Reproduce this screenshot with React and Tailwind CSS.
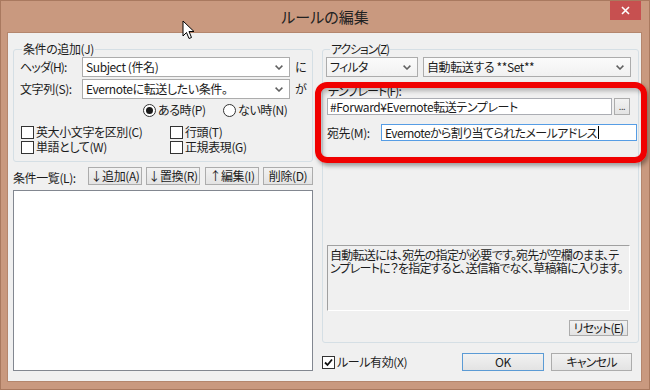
import React from "react";

const Chevron = () => (
  <svg width="8" height="5" viewBox="0 0 8 5" className="shrink-0">
    <path d="M0.6 0.6 L4 4 L7.4 0.6" fill="none" stroke="#606060" strokeWidth="1.5" />
  </svg>
);

const Combo = ({ text, className }) => (
  <div className={"h-[20px] border border-[#acacac] flex items-center pl-[3px] pr-[6px] " + className}>
    <span className="flex-1 whitespace-nowrap leading-[16px]">{text}</span>
    <Chevron />
  </div>
);

const Btn = ({ children, className }) => (
  <div className={"flex items-center justify-center border bg-linear-to-b from-[#f2f2f2] to-[#e3e3e3] whitespace-nowrap leading-[14px] " + className}>
    {children}
  </div>
);

const Check = ({ checked }) => (
  <div className="w-[13px] h-[13px] border border-[#333] bg-white flex items-center justify-center shrink-0">
    {checked && (
      <svg width="9" height="9" viewBox="0 0 9 9">
        <path d="M1 4.5 L3.5 7 L8 1.5" fill="none" stroke="#111" strokeWidth="1.8" />
      </svg>
    )}
  </div>
);

const Radio = ({ checked }) => (
  <div className="w-[13px] h-[13px] rounded-full border border-[#333] bg-white flex items-center justify-center shrink-0">
    {checked && <div className="w-[7px] h-[7px] rounded-full bg-[#1a1a1a]" />}
  </div>
);

const App = () => {
  return (
    <div className="relative w-[650px] h-[390px] overflow-hidden bg-[#c9997f] border border-[#a9795f] flex flex-col font-['Noto_Sans_CJK_JP',sans-serif] text-[12px] text-[#1c1c1c] tracking-[-0.4px] [font-feature-settings:'palt']">
      {/* title bar */}
      <div className="relative h-[31px] shrink-0 flex items-center justify-center">
        <span className="text-[15px] text-[#222] leading-[20px] mt-[1px] tracking-normal">ルールの編集</span>
        <div className="absolute right-[8px] top-0 w-[31px] h-[19px] bg-[#c75050] flex items-center justify-center">
          <svg width="9" height="9" viewBox="0 0 9 9">
            <path d="M1 1 L8 8 M8 1 L1 8" stroke="#fff" strokeWidth="1.6" />
          </svg>
        </div>
      </div>

      {/* client */}
      <div className="ml-[6px] mr-[7px] h-[350px] border border-[#b4866d] bg-[#f0f0f0] flex pl-[5px] pt-[16px] gap-[9px]">
        {/* left column */}
        <div className="w-[300px] flex flex-col">
          <div className="relative h-[113px] border border-[#d5dfe5] rounded-[3px] pt-[7px]">
            <span className="absolute left-[8px] top-[-8px] px-[1px] bg-[#f0f0f0] leading-[14px]">条件の追加(J)</span>
            <div className="flex items-center h-[20px] pl-[6px]">
              <span className="w-[62px] leading-[14px] tracking-[-0.9px]">ヘッダ(H):</span>
              <Combo className="w-[208px] bg-white" text="Subject (件名)" />
              <span className="ml-[5px] leading-[14px]">に</span>
            </div>
            <div className="flex items-center h-[20px] pl-[6px] mt-[2px]">
              <span className="w-[62px] leading-[14px]">文字列(S):</span>
              <Combo className="w-[208px] bg-white" text="Evernoteに転送したい条件。" />
              <span className="ml-[5px] leading-[14px]">が</span>
            </div>
            <div className="flex items-center h-[14px] pl-[129px] mt-[4px]">
              <div className="w-[80px] flex items-center gap-[2px]">
                <Radio checked />
                <span className="leading-[14px]">ある時(P)</span>
              </div>
              <div className="flex items-center gap-[2px]">
                <Radio />
                <span className="leading-[14px]">ない時(N)</span>
              </div>
            </div>
            <div className="flex items-center h-[14px] pl-[7px] mt-[8px]">
              <div className="w-[149px] flex items-center gap-[2px]">
                <Check />
                <span className="leading-[14px]">英大小文字を区別(C)</span>
              </div>
              <div className="flex items-center gap-[2px]">
                <Check />
                <span className="leading-[14px]">行頭(T)</span>
              </div>
            </div>
            <div className="flex items-center h-[14px] pl-[7px] mt-[1px]">
              <div className="w-[149px] flex items-center gap-[2px]">
                <Check />
                <span className="leading-[14px]">単語として(W)</span>
              </div>
              <div className="flex items-center gap-[2px]">
                <Check />
                <span className="leading-[14px]">正規表現(G)</span>
              </div>
            </div>
          </div>

          <div className="flex items-center h-[18px] mt-[5px]">
            <span className="w-[75px] leading-[14px] mt-[4px]">条件一覧(L):</span>
            <Btn className="w-[54px] h-[18px] border-[#acacac]">↓追加(A)</Btn>
            <Btn className="w-[54px] h-[18px] border-[#acacac] ml-[4px]">↓置換(R)</Btn>
            <Btn className="w-[54px] h-[18px] border-[#acacac] ml-[5px]">↑編集(I)</Btn>
            <Btn className="w-[50px] h-[18px] border-[#acacac] ml-[4px]">削除(D)</Btn>
          </div>

          <div className="mt-[5px] h-[181px] border border-[#828790] bg-white" />
        </div>

        {/* right column */}
        <div className="w-[317px] flex flex-col">
          <div className="relative h-[294px] border border-[#d5dfe5] rounded-[3px] pt-[7px]">
            <span className="absolute left-[7px] top-[-8px] px-[1px] bg-[#f0f0f0] leading-[14px] tracking-[-1.2px]">アクション(Z)</span>
            <div className="flex items-center pl-[3px] gap-[5px]">
              <Combo className="w-[92px] bg-linear-to-b from-[#fbfbfb] to-[#f1f1f1] tracking-[-0.8px]" text="フィルタ" />
              <Combo className="w-[208px] bg-linear-to-b from-[#fbfbfb] to-[#f1f1f1]" text="自動転送する **Set**" />
            </div>
            <div className="h-[14px] mt-[7px] pl-[5px] leading-[14px] tracking-[-0.9px]">テンプレート(F):</div>
            <div className="flex items-center pl-[4px]">
              <div className="w-[285px] h-[17px] border border-[#abadb3] bg-white flex items-center pl-[2px] leading-[14px] whitespace-nowrap">
                #Forward¥Evernote転送テンプレート
              </div>
              <Btn className="ml-[2px] w-[16px] h-[17px] border-[#acacac] text-[9px] text-[#444]">...</Btn>
            </div>
            <div className="flex items-center pl-[4px] mt-[9px]">
              <span className="w-[54px] leading-[14px]">宛先(M):</span>
              <div className="w-[256px] h-[17px] border border-[#569de5] bg-white flex items-center pl-[3px] leading-[14px] whitespace-nowrap tracking-[-0.6px]">
                Evernoteから割り当てられたメールアドレス
                <span className="inline-block w-px h-[13px] bg-black ml-[1px]" />
              </div>
            </div>
            <div className="ml-[4px] mt-[104px] w-[303px] h-[66px] border border-t-[#a0a0a0] border-l-[#a0a0a0] border-r-white border-b-white pl-[2px] pt-[2px] leading-[13px] whitespace-nowrap tracking-[-0.75px]">
              自動転送には、宛先の指定が必要です。宛先が空欄のまま、テ
              <br />
              ンプレートに？を指定すると、送信箱でなく、草稿箱に入ります。
            </div>
            <div className="flex justify-end pr-[10px] mt-[9px]">
              <Btn className="w-[59px] h-[16px] border-[#acacac] tracking-[-0.8px]">リセット(E)</Btn>
            </div>
          </div>

          <div className="flex items-center h-[18px] mt-[10px]">
            <div className="w-[140px] flex items-center gap-[2px]">
              <Check checked />
              <span className="leading-[14px]">ルール有効(X)</span>
            </div>
            <Btn className="w-[82px] h-[18px] border-[#5b9bd5]">OK</Btn>
            <Btn className="w-[81px] h-[18px] border-[#acacac] ml-[7px] tracking-[-0.8px]">キャンセル</Btn>
          </div>
        </div>
      </div>

      {/* red highlight annotation */}
      <div className="absolute left-[314px] top-[81px] w-[332px] h-[81px] border-[6px] border-[#f00000] rounded-[12px] shadow-[2px_3px_4px_rgba(0,0,0,0.35),inset_2px_3px_4px_rgba(0,0,0,0.25)]" />

      {/* mouse pointer */}
      <svg className="absolute left-[181px] top-[19px]" width="14" height="21" viewBox="0 0 14 21">
        <path d="M1 1 L1 16 L4.5 12.5 L7 18.5 L9.5 17.5 L7 11.5 L12 11.5 Z" fill="#fff" stroke="#000" strokeWidth="1" strokeLinejoin="round" />
      </svg>
    </div>
  );
};

export default App;
